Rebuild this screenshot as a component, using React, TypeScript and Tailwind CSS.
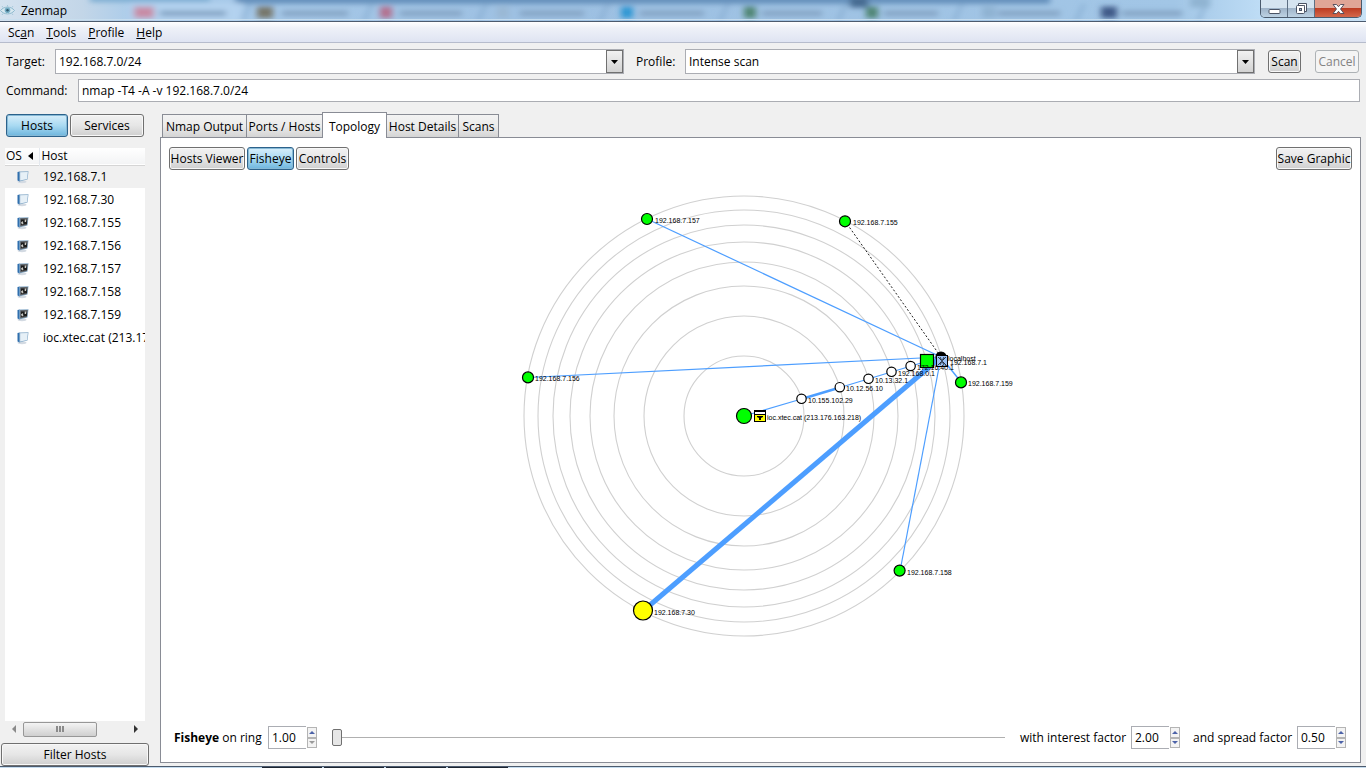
import { useState } from "react";
import clsx from "clsx";

interface Host {
  name: string;
  os: "unknown" | "linux";
}

const HOSTS: Host[] = [
  { name: "192.168.7.1", os: "unknown" },
  { name: "192.168.7.30", os: "unknown" },
  { name: "192.168.7.155", os: "linux" },
  { name: "192.168.7.156", os: "linux" },
  { name: "192.168.7.157", os: "linux" },
  { name: "192.168.7.158", os: "linux" },
  { name: "192.168.7.159", os: "linux" },
  { name: "ioc.xtec.cat (213.176.163.218)", os: "unknown" },
];

const TABS = [
  { label: "Nmap Output", width: "w-[85px]" },
  { label: "Ports / Hosts", width: "w-[77px]" },
  { label: "Topology", width: "w-[65px]" },
  { label: "Host Details", width: "w-[73px]" },
  { label: "Scans", width: "w-[41px]" },
];

const RINGS = [60, 100, 130, 154, 174, 191, 206, 220];

const EDGES = [
  { x1: 647, y1: 219, x2: 941, y2: 357, w: 1.2 },
  { x1: 528, y1: 377.5, x2: 941, y2: 357, w: 1.2 },
  { x1: 900, y1: 571, x2: 941, y2: 357, w: 1.2 },
  { x1: 961, y1: 382, x2: 941, y2: 357, w: 1.4 },
  { x1: 643, y1: 611, x2: 941, y2: 357, w: 5 },
  { x1: 744, y1: 416, x2: 801.5, y2: 399, w: 1.2 },
  { x1: 801.5, y1: 399, x2: 840, y2: 387.5, w: 2.4 },
  { x1: 840, y1: 387.5, x2: 941, y2: 357, w: 1.3 },
];

const NODES = [
  { x: 744, y: 416, r: 7.5, fill: "#00ff00" },
  { x: 643, y: 610.5, r: 9.5, fill: "#ffff00" },
  { x: 647, y: 219, r: 5.5, fill: "#00ff00" },
  { x: 845, y: 221.3, r: 5.5, fill: "#00ff00" },
  { x: 528, y: 377.4, r: 5.5, fill: "#00ff00" },
  { x: 961, y: 382.4, r: 5.5, fill: "#00ff00" },
  { x: 899.6, y: 570.6, r: 5.5, fill: "#00ff00" },
  { x: 801.5, y: 398.8, r: 4.7, fill: "#ffffff" },
  { x: 839.8, y: 387.2, r: 4.7, fill: "#ffffff" },
  { x: 868.5, y: 378.8, r: 4.7, fill: "#ffffff" },
  { x: 891.5, y: 371.8, r: 4.7, fill: "#ffffff" },
  { x: 910.6, y: 366, r: 4.7, fill: "#ffffff" },
  { x: 941, y: 357, r: 5, fill: "#000000" },
];

const LABELS = [
  { x: 655, y: 223, text: "192.168.7.157" },
  { x: 853, y: 225, text: "192.168.7.155" },
  { x: 535, y: 381, text: "192.168.7.156" },
  { x: 968, y: 386, text: "192.168.7.159" },
  { x: 907, y: 575, text: "192.168.7.158" },
  { x: 654, y: 615, text: "192.168.7.30" },
  { x: 767, y: 420, text: "ioc.xtec.cat (213.176.163.218)" },
  { x: 808, y: 403, text: "10.155.102.29" },
  { x: 846, y: 391, text: "10.12.56.10" },
  { x: 875, y: 383, text: "10.13.32.1" },
  { x: 898, y: 376, text: "192.168.0.1" },
  { x: 917, y: 370, text: "172.16.40.1" },
  { x: 948, y: 361, text: "localhost" },
  { x: 950, y: 365, text: "192.168.7.1" },
];

// Tab strip of the window that shows through the glass title bar
const GLASS_TABS = [
  { x: 134, w: 20, icon: "#c78ca6", tx: 160, tw: 66 },
  { x: 257, w: 16, icon: "#77776c", tx: 282, tw: 66 },
  { x: 380, w: 12, icon: "#b3708f", tx: 400, tw: 62 },
  { x: 497, w: 12, icon: "#9ab8d4", tx: 520, tw: 64 },
  { x: 621, w: 12, icon: "#2f97d3", tx: 640, tw: 64 },
  { x: 744, w: 12, icon: "#4f8573", tx: 762, tw: 60 },
  { x: 866, w: 12, icon: "#4f8573", tx: 884, tw: 54 },
  { x: 982, w: 14, icon: "#8fb2d2", tx: 998, tw: 62 },
  { x: 1101, w: 16, icon: "#3f5a88", tx: 1122, tw: 60 },
];

const BUTTON =
  "h-[23px] shrink-0 rounded-[3px] border border-[#707070] bg-linear-to-b from-[#f2f2f2] via-[#e6e6e6] to-[#cfcfcf] text-center shadow-[inset_0_0_0_1px_#f8f8f8] whitespace-nowrap";
const BUTTON_ON =
  "h-[23px] shrink-0 rounded-[3px] border border-[#2c628b] bg-linear-to-b from-[#d8eefa] via-[#a9daf2] to-[#6db5dd] text-center shadow-[inset_0_0_0_1px_#86b9d6] whitespace-nowrap";

function TitleBar() {
  return (
    <header className="relative flex h-[22px] shrink-0 items-start justify-between overflow-hidden border-b border-[#4c5b6e] bg-[#a3c5e4]">
      <svg className="absolute inset-0 h-full w-full" viewBox="0 0 1366 22" preserveAspectRatio="none" aria-hidden="true">
        <defs>
          <linearGradient id="glass" x1="0" x2="1" y1="0" y2="0">
            <stop offset="0" stopColor="#d4e2ef" />
            <stop offset="0.06" stopColor="#c3d6e8" />
            <stop offset="0.1" stopColor="#a9cbea" />
            <stop offset="0.4" stopColor="#9dc0e2" />
            <stop offset="0.86" stopColor="#a2c6e6" />
            <stop offset="0.93" stopColor="#c1dff7" />
            <stop offset="1" stopColor="#c8e2f6" />
          </linearGradient>
          <filter id="soft" x="-5%" y="-50%" width="110%" height="200%">
            <feGaussianBlur stdDeviation="3" />
          </filter>
        </defs>
        <rect width="1366" height="22" fill="url(#glass)" />
        <g filter="url(#soft)">
          <rect x="90" y="-4" width="120" height="6" fill="#79abd0" />
          <rect x="235" y="-6" width="815" height="10" fill="#6590bb" />
          <rect x="130" y="3" width="112" height="22" fill="#b3d2ef" />
          {GLASS_TABS.map((t) => (
            <g key={t.x}>
              <rect x={t.x} y="7" width={t.w} height="12" fill={t.icon} />
              <rect x={t.tx} y="11" width={t.tw} height="6" fill="#86a6c6" />
              <path d={`M${t.tx + t.tw + 16} 22l8-18`} stroke="#7ba2c8" strokeWidth="2" />
            </g>
          ))}
          <rect x="850" y="-4" width="18" height="12" fill="#466c92" />
          <rect x="1190" y="-4" width="20" height="12" fill="#90b4d2" />
        </g>
        <path d="M0 20.500H1366" stroke="#c9deef" />
      </svg>
      <div className="relative flex h-[21px] items-center gap-1.5">
        <svg width="15" height="13" viewBox="0 0 15 13" aria-hidden="true">
          <path d="M0.500 6.500C4 2 11 2 14.500 6.500C11 11 4 11 0.500 6.500Z" fill="#d8e9f1" stroke="#86b3c8" strokeWidth="0.900" />
          <path d="M3 3.500L2 2M7.500 2.500V1M12 3.500L13 2M3 9.500L2 11M12 9.500L13 11" stroke="#9cc3d4" strokeWidth="0.800" />
          <circle cx="7.500" cy="6.300" r="2.800" fill="#74adc5" />
          <circle cx="7.500" cy="6.300" r="1.200" fill="#2f5a70" />
        </svg>
        <h1>Zenmap</h1>
      </div>
      <div className="relative mr-1 flex h-[18px] overflow-hidden rounded-b-[5px] border border-t-0 border-[#4a5a6c]">
        <button aria-label="Minimize" className="flex w-[27px] items-center justify-center border-r border-[#5d6f83] bg-linear-to-b from-[#d5e4f0] from-45% via-[#9fb4c9] via-50% to-[#bdd2e3]">
          <svg width="13" height="14" viewBox="0 0 13 14">
            <rect x="1" y="7.500" width="11" height="4" rx="1" fill="#fff" stroke="#4b5465" />
          </svg>
        </button>
        <button aria-label="Restore" className="flex w-[27px] items-center justify-center border-r border-[#5d6f83] bg-linear-to-b from-[#d5e4f0] from-45% via-[#9fb4c9] via-50% to-[#bdd2e3]">
          <svg width="13" height="14" viewBox="0 0 13 14">
            <path d="M3.500 1.500h8v8h-2v-6h-6z" fill="#fff" stroke="#4b5465" />
            <rect x="1.500" y="3.500" width="8" height="8" rx="1" fill="#fff" stroke="#4b5465" />
            <rect x="4.500" y="6.500" width="2" height="2" fill="#9fb4c9" stroke="#4b5465" />
          </svg>
        </button>
        <button aria-label="Close" className="flex w-[46px] items-center justify-center bg-linear-to-b from-[#e0a596] from-45% via-[#bd3c22] via-50% to-[#d4674a]">
          <svg width="13" height="14" viewBox="0 0 13 14">
            <path d="M1 2.500h3.500l2 2.200 2-2.200H12L8.500 7l3.500 4.500H8.500l-2-2.200-2 2.200H1L4.500 7z" fill="#fff" stroke="#4b4656" strokeWidth="0.900" />
          </svg>
        </button>
      </div>
    </header>
  );
}

function DropArrow() {
  return (
    <svg width="7" height="4" viewBox="0 0 7 4" aria-hidden="true">
      <path d="M0 0h7L3.500 4z" fill="#000" />
    </svg>
  );
}

function ScanForm() {
  return (
    <form className="shrink-0 px-1.5 pt-1.5" onSubmit={(e) => e.preventDefault()}>
      <div className="flex h-[25px] items-center">
        <label htmlFor="target" className="w-[49px] shrink-0">Target:</label>
        <div className="flex h-full w-[569px] min-w-0 shrink border border-[#abadb3] bg-white">
          <input id="target" defaultValue="192.168.7.0/24" className="min-w-0 flex-1 px-[3px] outline-none" />
          <button type="button" aria-label="Recent targets" className="flex w-[17px] items-center justify-center border border-[#707070] bg-linear-to-b from-[#f2f2f2] to-[#d2d2d2]">
            <DropArrow />
          </button>
        </div>
        <label htmlFor="profile" className="ml-3 w-[49px] shrink-0">Profile:</label>
        <div className="relative h-full min-w-0 flex-1 border border-[#abadb3] bg-white">
          <select id="profile" className="h-full w-full appearance-none px-[3px] outline-none">
            <option>Intense scan</option>
          </select>
          <span className="pointer-events-none absolute inset-y-0 right-0 flex w-[17px] items-center justify-center border border-[#707070] bg-linear-to-b from-[#f2f2f2] to-[#d2d2d2]">
            <DropArrow />
          </span>
        </div>
        <button type="submit" className={clsx(BUTTON, "ml-[13px] w-[33px]")}>Scan</button>
        <button type="button" disabled className="mr-px ml-3.5 h-[23px] w-11 shrink-0 rounded-[3px] border border-[#adb2b5] bg-[#f4f4f4] text-center text-[#838383]">
          Cancel
        </button>
      </div>
      <div className="mt-[5px] flex h-[23px] items-center">
        <label htmlFor="command" className="w-[72px] shrink-0">Command:</label>
        <input id="command" defaultValue="nmap -T4 -A -v 192.168.7.0/24" className="h-full min-w-0 flex-1 border border-[#abadb3] bg-white px-[3px] outline-none" />
      </div>
    </form>
  );
}

function OsIcon({ os }: { os: Host["os"] }) {
  return (
    <svg width="14" height="14" viewBox="0 0 14 14" aria-hidden="true" className="ml-[11px] block">
      <ellipse cx="6" cy="11.800" rx="4.500" ry="1.400" fill="#d3dae2" />
      <path d="M1.500 2L3.800 1.500V11.500L1.500 10.500Z" fill="#2f6fae" />
      <path d="M3.500 1.500L12.500 1.200L11.500 9.500L3.500 11.500Z" fill="#86aac8" />
      {os === "linux" ? (
        <>
          <path d="M4.200 2.200L11.800 2L11 9L4.200 10.500Z" fill="#5c5f62" />
          <path d="M5 3.500h6v4.500L5 9z" fill="#1d1d1d" />
          <path d="M5 6.500l1.500-1.500 1 2.500-1.500 1zM8.700 3.500h1.800l-.5 2.500h-1.300z" fill="#c9c9c4" />
        </>
      ) : (
        <path d="M4.200 2.200L11.800 2L11 9L4.200 10.500Z" fill="#e6f0f7" />
      )}
    </svg>
  );
}

function Sidebar() {
  const [selected, setSelected] = useState("192.168.7.1");

  return (
    <aside className="flex w-[150px] shrink-0 flex-col">
      <div className="flex gap-0.5 pt-2 pl-1.5">
        <button className={clsx(BUTTON_ON, "w-[62px]")}>Hosts</button>
        <button className={clsx(BUTTON, "w-[74px]")}>Services</button>
      </div>
      <div className="mx-[5px] mt-[11px] min-h-0 flex-1 overflow-hidden bg-white">
        <table className="w-full table-fixed border-collapse text-left">
          <thead>
            <tr className="h-[17px] border-b border-[#d5d5d5] bg-linear-to-b from-white to-[#f3f4f5]">
              <th className="w-[34px] border-r border-[#e3e8ee] p-0 pl-px font-normal leading-4">
                <span className="flex items-center gap-1.5">
                  OS
                  <svg width="5" height="8" viewBox="0 0 5 8" aria-hidden="true">
                    <path d="M5 0v8L0 4z" fill="#000" />
                  </svg>
                </span>
              </th>
              <th className="p-0 pl-0.5 font-normal leading-4">Host</th>
            </tr>
          </thead>
          <tbody>
            {HOSTS.map((host) => (
              <tr
                key={host.name}
                onClick={() => setSelected(host.name)}
                className={clsx("h-[23px]", selected === host.name && "bg-[#f0f0f0]")}
              >
                <td className="p-0">
                  <OsIcon os={host.os} />
                </td>
                <td className="overflow-hidden p-0 pl-1 whitespace-nowrap">{host.name}</td>
              </tr>
            ))}
          </tbody>
        </table>
      </div>
      <div className="mx-[5px] flex h-4 shrink-0 items-center bg-[#f0f0f0]">
        <button aria-label="Scroll left" className="flex w-[18px] justify-center">
          <svg width="4" height="8" viewBox="0 0 4 8"><path d="M4 0v8L0 4z" fill="#8a8a8a" /></svg>
        </button>
        <div className="flex h-[15px] w-[74px] items-center justify-center gap-px rounded-[2px] border border-[#979797] bg-linear-to-b from-[#f4f4f4] to-[#cfcfcf]">
          <i className="h-1.5 w-0.5 bg-[#8a8a8a]" />
          <i className="h-1.5 w-0.5 bg-[#8a8a8a]" />
          <i className="h-1.5 w-0.5 bg-[#8a8a8a]" />
        </div>
        <button aria-label="Scroll right" className="ml-auto flex w-[18px] justify-center">
          <svg width="4" height="8" viewBox="0 0 4 8"><path d="M0 0v8l4-4z" fill="#333" /></svg>
        </button>
      </div>
      <button className={clsx(BUTTON, "mx-px mt-1.5")}>Filter Hosts</button>
    </aside>
  );
}

function TopologyMap() {
  return (
    <svg width="521" height="464" viewBox="500 184 521 464" role="img" aria-label="Network topology" className="mx-auto block shrink-0">
      <g fill="none" stroke="#d0d0d0" strokeWidth="1.100">
        {RINGS.map((r) => (
          <circle key={r} cx="744" cy="416" r={r} />
        ))}
      </g>
      <g stroke="#4d9eff">
        {EDGES.map((e, i) => (
          <line key={i} x1={e.x1} y1={e.y1} x2={e.x2} y2={e.y2} strokeWidth={e.w} />
        ))}
      </g>
      <path d="M845 221L941 357" stroke="#222" strokeDasharray="2 2" />
      <g stroke="#000" strokeWidth="1.200">
        {NODES.map((n) => (
          <circle key={`${n.x}-${n.y}`} cx={n.x} cy={n.y} r={n.r} fill={n.fill} />
        ))}
        <rect x="920.500" y="354.500" width="13" height="13" fill="#00ff00" />
      </g>
      {/* router */}
      <rect x="936.500" y="355.500" width="11" height="11" fill="#9dc3f7" stroke="#000" />
      <path d="M938 357l3 3M946 357l-3 3M938 365l3-3M946 365l-3-3M940 357l4 8M944 357l-4 8" stroke="#000" strokeWidth="0.700" />
      {/* firewall padlock */}
      <rect x="754.500" y="410.500" width="11" height="4" fill="#fff" stroke="#000" />
      <path d="M754 411h12" stroke="#000" strokeWidth="2" />
      <rect x="754.500" y="414.500" width="11" height="7" fill="#ffff00" stroke="#000" />
      <path d="M757 416h6v1l-2 1v2h-2v-2l-2-1z" fill="#000" />
      <g fill="#000" className="font-['Liberation_Sans',sans-serif] text-[7px]">
        {LABELS.map((l) => (
          <text key={l.text} x={l.x} y={l.y}>
            {l.text}
          </text>
        ))}
      </g>
    </svg>
  );
}

interface SpinBoxProps {
  id: string;
  value: string;
  atMin?: boolean;
}

function SpinBox({ id, value, atMin }: SpinBoxProps) {
  return (
    <div className="flex h-[23px] shrink-0 items-center gap-px">
      <input id={id} defaultValue={value} className="h-full w-[38px] border border-r-0 border-[#abadb3] bg-white px-[3px] outline-none" />
      <div className="flex h-[21px] w-2.5 flex-col">
        <button aria-label="Increase" className="flex flex-1 items-center justify-center border border-[#b4b4b4] bg-[#f3f3f3]">
          <svg width="6" height="3" viewBox="0 0 6 3"><path d="M0 3h6L3 0z" fill="#4c62a8" /></svg>
        </button>
        <button aria-label="Decrease" disabled={atMin} className="flex flex-1 items-center justify-center border border-[#b4b4b4] bg-[#f3f3f3]">
          <svg width="6" height="3" viewBox="0 0 6 3"><path d="M0 0h6L3 3z" fill={atMin ? "#9a9a9a" : "#4c62a8"} /></svg>
        </button>
      </div>
    </div>
  );
}

function FisheyeBar() {
  const [ring, setRing] = useState(0);

  return (
    <div className="flex shrink-0 items-center pr-3.5 pb-[13px] pl-[13px]">
      <label htmlFor="ring" className="w-[94px] shrink-0 whitespace-nowrap">
        <b>Fisheye</b> on ring
      </label>
      <SpinBox id="ring" value="1.00" atMin />
      <input
        type="range"
        aria-label="Ring"
        min={0}
        max={8}
        value={ring}
        onChange={(e) => setRing(Number(e.target.value))}
        className="mx-[15px] h-[17px] min-w-0 flex-1 appearance-none bg-transparent bg-[linear-gradient(#b0b0b0,#b0b0b0)] bg-size-[100%_1px] bg-center bg-no-repeat [&::-webkit-slider-thumb]:h-[17px] [&::-webkit-slider-thumb]:w-2.5 [&::-webkit-slider-thumb]:appearance-none [&::-webkit-slider-thumb]:rounded-[2px] [&::-webkit-slider-thumb]:border [&::-webkit-slider-thumb]:border-[#707070] [&::-webkit-slider-thumb]:bg-[#e6e6e6]"
      />
      <label htmlFor="interest" className="w-[111px] shrink-0 whitespace-nowrap">with interest factor</label>
      <SpinBox id="interest" value="2.00" />
      <label htmlFor="spread" className="ml-[13px] w-[104px] shrink-0 whitespace-nowrap">and spread factor</label>
      <SpinBox id="spread" value="0.50" />
    </div>
  );
}

export default function App() {
  const [tab, setTab] = useState("Topology");

  return (
    <div className="flex h-screen flex-col overflow-hidden bg-[#f0f0f0] font-['Open_Sans','Noto_Sans',sans-serif] text-xs text-black">
      <TitleBar />
      <nav className="flex h-[21px] shrink-0 items-center gap-3 border-b border-[#b6bccc] bg-linear-to-b from-white from-0% via-[#eef1f8] via-30% to-[#dfe4f2] pt-0.5 pl-2">
        <button>Sc<u>a</u>n</button>
        <button><u>T</u>ools</button>
        <button><u>P</u>rofile</button>
        <button><u>H</u>elp</button>
      </nav>
      <ScanForm />
      <div className="flex min-h-0 flex-1">
        <div className="flex shrink-0 pt-1 pr-2.5">
          <Sidebar />
        </div>
        <main className="flex min-w-0 flex-1 flex-col pt-2.5 pr-[5px] pb-[3px]">
          <div role="tablist" className="flex h-[25px] shrink-0 items-end pl-0.5">
            {TABS.map((t) => (
              <button
                key={t.label}
                role="tab"
                aria-selected={tab === t.label}
                onClick={() => setTab(t.label)}
                className={clsx(
                  "-mr-px border border-b-0 border-[#898c95] pt-0.5 whitespace-nowrap",
                  t.width,
                  tab === t.label
                    ? "relative z-10 -mb-px h-[26px] bg-white"
                    : "h-[23px] bg-linear-to-b from-[#f3f3f3] via-[#ebebeb] to-[#d4d4d4]"
                )}
              >
                {t.label}
              </button>
            ))}
          </div>
          <section className="flex min-h-0 flex-1 flex-col border border-[#898c95] bg-white">
            <div className="flex shrink-0 gap-0.5 px-2 pt-[9px]">
              <button className={clsx(BUTTON, "w-[76px]")}>Hosts Viewer</button>
              <button className={clsx(BUTTON_ON, "w-[47px]")}>Fisheye</button>
              <button className={clsx(BUTTON, "w-[53px]")}>Controls</button>
              <button className={clsx(BUTTON, "ml-auto w-[76px]")}>Save Graphic</button>
            </div>
            <div className="min-h-0 flex-1 overflow-hidden pt-3.5">
              <TopologyMap />
            </div>
            <FisheyeBar />
          </section>
        </main>
      </div>
      <footer className="flex h-0.5 shrink-0 gap-0.5 border-t border-[#4c5b6e] bg-[#c5dcef] pl-[262px]">
        <i className="w-[60px] bg-[#1c2430]" />
        <i className="w-[60px] bg-[#1c2430]" />
        <i className="w-[60px] bg-[#1c2430]" />
        <i className="w-[60px] bg-[#1c2430]" />
      </footer>
    </div>
  );
}
